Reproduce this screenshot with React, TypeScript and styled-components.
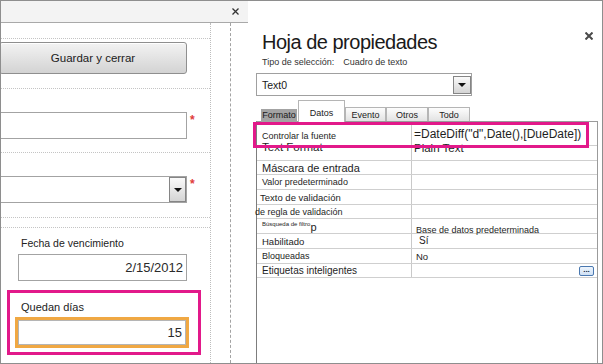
import styled, { createGlobalStyle } from "styled-components";

const GlobalStyle = createGlobalStyle`
  html, body { margin: 0; padding: 0; background: #fff; }
  body { font-family: "Liberation Sans", Arial, sans-serif; color: #1e1e1e; }
  * { box-sizing: border-box; }
`;

const PINK = "#e2198a";
const ORANGE = "#f0a843";

type Row = {
  h: number;
  label: string;
  ls: number;
  shift?: number;
  lift?: number;
  tiny?: boolean;
  value?: string;
  vs?: number;
  vpad?: number;
  vtop?: number;
  more?: boolean;
};

const rows: Row[] = [
  { h: 24, label: "Controlar la fuente", ls: 9, lift: -2, value: '=DateDiff("d",Date(),[DueDate])', vs: 12, vtop: 1 },
  { h: 15, label: "Text Format", ls: 11.5, lift: 6, value: "Plain Text", vs: 11.5, vtop: -5 },
  { h: 14, label: "Máscara de entrada", ls: 11 },
  { h: 15, label: "Valor predeterminado", ls: 9 },
  { h: 15, label: "Texto de validación", ls: 9.5, shift: -2 },
  { h: 14, label: "de regla de validación", ls: 9, shift: -7 },
  { h: 15, label: "Búsqueda de filtro", ls: 6, tiny: true, value: "Base de datos predeterminada", vs: 9, vpad: 4, vtop: 6 },
  { h: 15, label: "Habilitado", ls: 9.5, value: "Sí", vs: 10, vpad: 7, vtop: -1 },
  { h: 15, label: "Bloqueadas", ls: 9, value: "No", vs: 9.5, vpad: 4 },
  { h: 14, label: "Etiquetas inteligentes", ls: 10, more: true },
];

const Frame = styled.div`
  width: 603px;
  height: 364px;
  border: 1px solid #8e8e8e;
  display: flex;
  overflow: hidden;
  background: #fff;
`;

/* left side: the form in design view */
const DesignPane = styled.div`
  width: 247px;
  flex: none;
  display: flex;
  flex-direction: column;
`;

const PaneBar = styled.div`
  height: 22px;
  flex: none;
  background: #f3f3f3;
  border-bottom: 1px solid #a9a9a9;
  display: flex;
  justify-content: flex-end;
  align-items: center;
  padding-right: 9px;
`;

const Canvas = styled.div`
  flex: 1;
  display: flex;
`;

const FormColumn = styled.div`
  width: 210px;
  flex: none;
  border-right: 1px dotted #bdbdbd;
  display: flex;
  flex-direction: column;
`;

const Gutter = styled.div`
  width: 20px;
  flex: none;
  border-right: 1px dashed #a3a3a3;
`;

const Cell = styled.div<{ $h: number; $line?: boolean }>`
  height: ${(p) => p.$h}px;
  flex: none;
  border-bottom: ${(p) => (p.$line ? "1px dotted #c4c4c4" : "none")};
  display: flex;
  flex-direction: column;
`;

const SaveButton = styled.div`
  margin: 3px 0 0 -2px;
  width: 188px;
  height: 32px;
  border: 1px solid #8f8f8f;
  border-radius: 3px;
  background: linear-gradient(#f3f3f3, #d3d3d3);
  box-shadow: inset 1px 1px 0 #fff;
  display: flex;
  align-items: center;
  justify-content: center;
  font-size: 11.5px;
  color: #202020;
`;

const FieldRow = styled.div`
  display: flex;
  align-items: flex-start;
  margin-top: 23px;
`;

const TextBox = styled.div<{ $w: number; $left: number }>`
  width: ${(p) => p.$w}px;
  height: 27px;
  margin-left: ${(p) => p.$left}px;
  border: 1px solid #a3a3a3;
  background: #fff;
  display: flex;
  align-items: center;
  justify-content: flex-end;
  padding-right: 3px;
  font-size: 13px;
  color: #2a2a2a;
`;

const DropButton = styled.div<{ $w: number; $h: number }>`
  width: ${(p) => p.$w}px;
  height: ${(p) => p.$h}px;
  border: 1px solid #858585;
  background: linear-gradient(#fafafa, #d4d4d4);
  display: flex;
  align-items: center;
  justify-content: center;
  flex: none;
`;

const Arrow = styled.div`
  width: 0;
  height: 0;
  border-left: 4px solid transparent;
  border-right: 4px solid transparent;
  border-top: 4px solid #111;
`;

const Required = styled.span`
  color: #e03a3a;
  font-size: 12px;
  font-weight: bold;
  line-height: 10px;
  margin: 3px 0 0 3px;
`;

const FieldLabel = styled.div<{ $left: number; $top: number }>`
  margin: ${(p) => p.$top}px 0 0 ${(p) => p.$left}px;
  font-size: 10.5px;
  line-height: 12px;
  color: #222;
`;

const Callout = styled.div`
  margin: 1px 0 0 6px;
  width: 194px;
  height: 65px;
  border: 3px solid ${PINK};
  padding: 8px 0 0 5px;
  display: flex;
  flex-direction: column;
  flex: none;
`;

const DaysBox = styled.div`
  margin-top: 4px;
  width: 174px;
  height: 31px;
  border: 3px solid ${ORANGE};
  box-shadow: inset 0 0 0 1px #b5b5b5;
  display: flex;
  align-items: center;
  justify-content: flex-end;
  padding-right: 4px;
  font-size: 13px;
  color: #2a2a2a;
`;

/* right side: property sheet */
const SheetPane = styled.div`
  flex: 1;
  display: flex;
  flex-direction: column;
  padding: 30px 4px 0 8px;
`;

const SheetHeader = styled.div`
  display: flex;
  justify-content: space-between;
  align-items: flex-start;
  padding-left: 6px;
`;

const Title = styled.div`
  font-size: 20px;
  letter-spacing: -0.5px;
  line-height: 22px;
  color: #1a1a1a;
`;

const SelType = styled.div`
  margin-top: 4px;
  padding-left: 6px;
  font-size: 9px;
  line-height: 11px;
  color: #333;
  display: flex;
  gap: 9px;
`;

const SelectBox = styled.div`
  margin-top: 5px;
  width: 216px;
  height: 23px;
  border: 1px solid #a0a0a0;
  display: flex;
  align-items: center;
  justify-content: space-between;
  padding-left: 5px;
  font-size: 10.5px;
  color: #1a1a1a;
`;

const TabBar = styled.div`
  margin-top: 4px;
  height: 21px;
  flex: none;
  display: flex;
  align-items: flex-end;
  padding-left: 4px;
  position: relative;
  z-index: 1;
`;

const Tab = styled.div<{ $w: number; $active?: boolean; $plain?: boolean }>`
  width: ${(p) => p.$w}px;
  height: ${(p) => (p.$active ? 22 : 14)}px;
  margin-bottom: ${(p) => (p.$active ? -1 : 0)}px;
  border: ${(p) => (p.$plain ? "none" : "1px solid #b5b5b5")};
  border-bottom: none;
  background: ${(p) =>
    p.$active ? "#fff" : p.$plain ? "transparent" : "linear-gradient(#fdfdfd, #e2e2e2)"};
  font-size: 9px;
  line-height: 11px;
  color: #222;
  text-align: center;
  padding-top: ${(p) => (p.$active ? 7 : 2)}px;
`;

const Selected = styled.span`
  display: inline-block;
  background: #a3a3a3;
  color: #1a1a1a;
  padding: 1px 1px 2px;
`;

const Grid = styled.div`
  flex: 1;
  border: 1px solid #9b9b9b;
  border-left-color: #7d7d7d;
  border-bottom: none;
  position: relative;
`;

const PropRow = styled.div<{ $h: number }>`
  height: ${(p) => p.$h}px;
  display: grid;
  grid-template-columns: 155px 1fr;
  border-bottom: 1px solid #cfcfcf;
`;

const PropLabel = styled.div<{ $size: number; $shift: number; $lift: number }>`
  border-right: 1px solid #c9c9c9;
  padding: 0 0 0 5px;
  margin-left: ${(p) => p.$shift}px;
  display: flex;
  align-items: center;
  font-size: ${(p) => p.$size}px;
  white-space: nowrap;
  color: #1e1e1e;
  span {
    position: relative;
    top: ${(p) => p.$lift}px;
  }
`;

const TinyLabel = styled.div`
  border-right: 1px solid #c9c9c9;
  padding: 1px 0 0 5px;
  display: flex;
  align-items: flex-start;
  white-space: nowrap;
  font-size: 6px;
  line-height: 8px;
  color: #1e1e1e;
  span {
    font-size: 11px;
    line-height: 12px;
    margin-top: 1px;
  }
`;

const PropValue = styled.div<{ $size: number; $pad: number; $top: number }>`
  display: flex;
  align-items: center;
  justify-content: space-between;
  padding: ${(p) => Math.max(p.$top, 0)}px 3px 0 ${(p) => p.$pad}px;
  font-size: ${(p) => p.$size}px;
  white-space: nowrap;
  color: #1e1e1e;
  span {
    position: relative;
    top: ${(p) => Math.min(p.$top, 0)}px;
  }
`;

const BuildButton = styled.div`
  margin-left: auto;
  width: 15px;
  height: 10px;
  border: 1px solid #4a78b0;
  border-radius: 2px;
  background: linear-gradient(#eef5fd, #cfe0f4);
  font-size: 8px;
  line-height: 5px;
  font-weight: bold;
  text-align: center;
  color: #102040;
`;

const Highlight = styled.div`
  position: absolute;
  left: -4px;
  top: 0;
  width: 336px;
  height: 26px;
  border: 3px solid ${PINK};
  pointer-events: none;
  z-index: 2;
`;

const CloseIcon = ({ size, stroke, color }: { size: number; stroke: number; color: string }) => (
  <svg width={size} height={size} viewBox={`0 0 ${size} ${size}`}>
    <path d={`M0.5 0.5 L${size - 0.5} ${size - 0.5} M${size - 0.5} 0.5 L0.5 ${size - 0.5}`} stroke={color} strokeWidth={stroke} />
  </svg>
);

const SheetClose = styled.div`
  margin: 1px 5px 0 0;
  display: flex;
`;

export default function App() {
  return (
    <>
      <GlobalStyle />
      <Frame>
        <DesignPane>
          <PaneBar>
            <CloseIcon size={7} stroke={1.3} color="#333" />
          </PaneBar>
          <Canvas>
            <FormColumn>
              <Cell $h={16} $line />
              <Cell $h={50} $line>
                <SaveButton>Guardar y cerrar</SaveButton>
              </Cell>
              <Cell $h={64} $line>
                <FieldRow>
                  <TextBox $w={187} $left={-1} />
                  <Required>*</Required>
                </FieldRow>
              </Cell>
              <Cell $h={65} $line>
                <FieldRow>
                  <TextBox $w={187} $left={-1}>
                    <DropButton $w={17} $h={25} style={{ marginRight: -3 }}>
                      <Arrow />
                    </DropButton>
                  </TextBox>
                  <Required>*</Required>
                </FieldRow>
              </Cell>
              <Cell $h={10} $line />
              <Cell $h={61}>
                <FieldLabel $left={20} $top={9}>Fecha de vencimiento</FieldLabel>
                <TextBox $w={169} $left={17} style={{ marginTop: 5 }}>2/15/2012</TextBox>
              </Cell>
              <Callout>
                <FieldLabel $left={6} $top={0} style={{ fontSize: 11 }}>Quedan días</FieldLabel>
                <DaysBox>15</DaysBox>
              </Callout>
            </FormColumn>
            <Gutter />
          </Canvas>
        </DesignPane>

        <SheetPane>
          <SheetHeader>
            <Title>Hoja de propiedades</Title>
            <SheetClose>
              <CloseIcon size={8} stroke={2} color="#4a4a4a" />
            </SheetClose>
          </SheetHeader>
          <SelType>
            <span>Tipo de selección:</span>
            <span>Cuadro de texto</span>
          </SelType>
          <SelectBox>
            Text0
            <DropButton $w={18} $h={18}>
              <Arrow />
            </DropButton>
          </SelectBox>
          <TabBar>
            <Tab $w={38} $plain>
              <Selected>Formato</Selected>
            </Tab>
            <Tab $w={47} $active>Datos</Tab>
            <Tab $w={41}>Evento</Tab>
            <Tab $w={42}>Otros</Tab>
            <Tab $w={42}>Todo</Tab>
          </TabBar>
          <Grid>
            {rows.map((r) => (
              <PropRow key={r.label} $h={r.h}>
                {r.tiny ? (
                  <TinyLabel>
                    {r.label}
                    <span>p</span>
                  </TinyLabel>
                ) : (
                  <PropLabel $size={r.ls} $shift={r.shift ?? 0} $lift={-(r.lift ?? 0) || 0}>
                    <span>{r.label}</span>
                  </PropLabel>
                )}
                <PropValue $size={r.vs ?? 10} $pad={r.vpad ?? 2} $top={r.vtop ?? 0}>
                  <span>{r.value}</span>
                  {r.more && <BuildButton>...</BuildButton>}
                </PropValue>
              </PropRow>
            ))}
            <Highlight />
          </Grid>
        </SheetPane>
      </Frame>
    </>
  );
}
